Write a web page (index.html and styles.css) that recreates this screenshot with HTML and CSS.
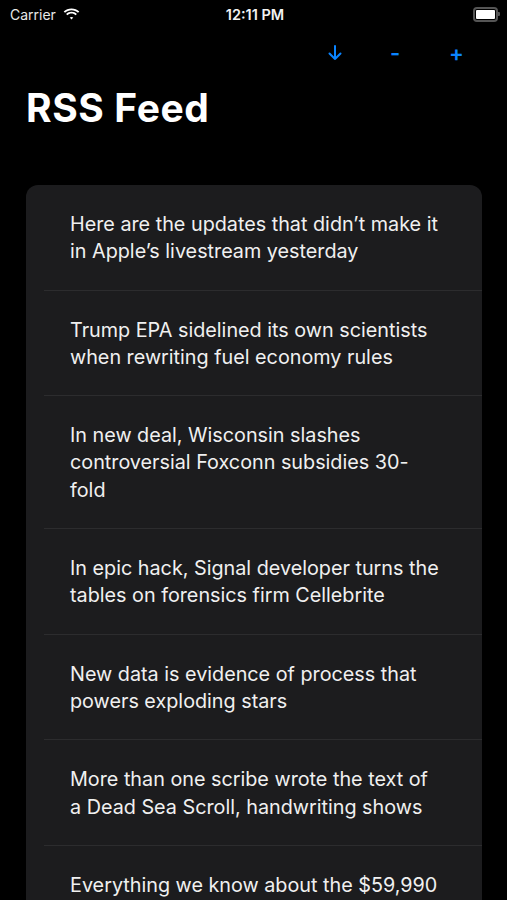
FILE: index.html
```html
<html>
    <head>
        <title>RSS Feed</title>
        <link rel="stylesheet" href="styles.css">
    </head>

    <body>
        <div class="status">
            <div class="carrier">Carrier
                <svg class="wifi" width="17" height="12" viewBox="0 0 17 12">
                    <path d="M8.5 2.2c2.5 0 4.8 1 6.5 2.6l1.3-1.3C14.2 1.5 11.5 0.4 8.5 0.4S2.8 1.5 0.7 3.5L2 4.8c1.7-1.6 4-2.6 6.5-2.6z" fill="#fff"/>
                    <path d="M8.5 5.6c1.6 0 3 .6 4.1 1.6l1.3-1.3C12.5 4.6 10.6 3.8 8.5 3.8S4.5 4.6 3.1 5.9l1.3 1.3c1.1-1 2.5-1.6 4.1-1.6z" fill="#fff"/>
                    <path d="M8.5 8.9c.7 0 1.3.3 1.8.7L8.5 11.5 6.7 9.6c.5-.4 1.1-.7 1.8-.7z" fill="#fff"/>
                </svg>
            </div>
            <div class="time">12:11 PM</div>
            <div class="battery"><div class="level"></div></div>
        </div>

        <div class="toolbar">
            <svg class="btn" width="14" height="16" viewBox="0 0 14 16">
                <path d="M7 1v13M1.5 8.5L7 14l5.5-5.5" stroke="#0a84ff" stroke-width="2" fill="none" stroke-linecap="round" stroke-linejoin="round"/>
            </svg>
            <span class="btn minus">-</span>
            <span class="btn plus">+</span>
        </div>

        <H1>RSS Feed</H1>

        <div class="list">
            <div class="row"><div class="txt">Here are the updates that didn’t make it in Apple’s livestream yesterday</div></div>
            <div class="row"><div class="txt">Trump EPA sidelined its own scientists when rewriting fuel economy rules</div></div>
            <div class="row"><div class="txt">In new deal, Wisconsin slashes controversial Foxconn subsidies 30-fold</div></div>
            <div class="row"><div class="txt">In epic hack, Signal developer turns the tables on forensics firm Cellebrite</div></div>
            <div class="row"><div class="txt">New data is evidence of process that powers exploding stars</div></div>
            <div class="row"><div class="txt">More than one scribe wrote the text of a Dead Sea Scroll, handwriting shows</div></div>
            <div class="row"><div class="txt">Everything we know about the $59,990 Lucid Air sedan and its tech</div></div>
        </div>
    </body>
</html>
```

FILE: styles.css
```css
BODY {margin:0; height:900px; overflow:hidden; background-color:#000; color:#fff; font-family: Inter, "Noto Sans", sans-serif;}

.status {display:flex; justify-content:space-between; align-items:center; height:28px; padding:0 7px 0 10px;}
.carrier {display:flex; align-items:center; gap:7px; font-size:14px; color:#e8e8e8; width:90px;}
.time {font-size:14.5px; font-weight:600; color:#f2f2f2;}
.battery {width:90px; display:flex; justify-content:flex-end;}
.battery .level {width:19px; height:9px; border:2px solid #555; border-radius:4px; background:#fff; background-clip:content-box; padding:1px;}
.battery::after {content:""; width:2px; height:4px; background:#555; border-radius:0 1px 1px 0; align-self:center;}

.toolbar {display:flex; justify-content:flex-end; align-items:center; height:50px; padding-right:44px;}
.btn {color:#0a84ff; text-align:center; font-size:22px; font-weight:600;}
.toolbar svg.btn {width:14px; margin-right:46px;}
.minus {width:14px; margin-right:47px;}
.plus {width:14px;}

H1 {font-size:39px; font-weight:700; margin:6px 0 0 26px; height:70px; letter-spacing:0.6px;}

.list {margin:31px 25px 0 26px; background:#1c1c1e; border-radius:12px;}
.row {padding-left:18px;}
.row + .row .txt {border-top:1px solid #2c2c2e;}
.txt {padding:26px 41px 24px 26px; font-size:19.77px; line-height:27.3px; color:#f0f0f0;}
```
